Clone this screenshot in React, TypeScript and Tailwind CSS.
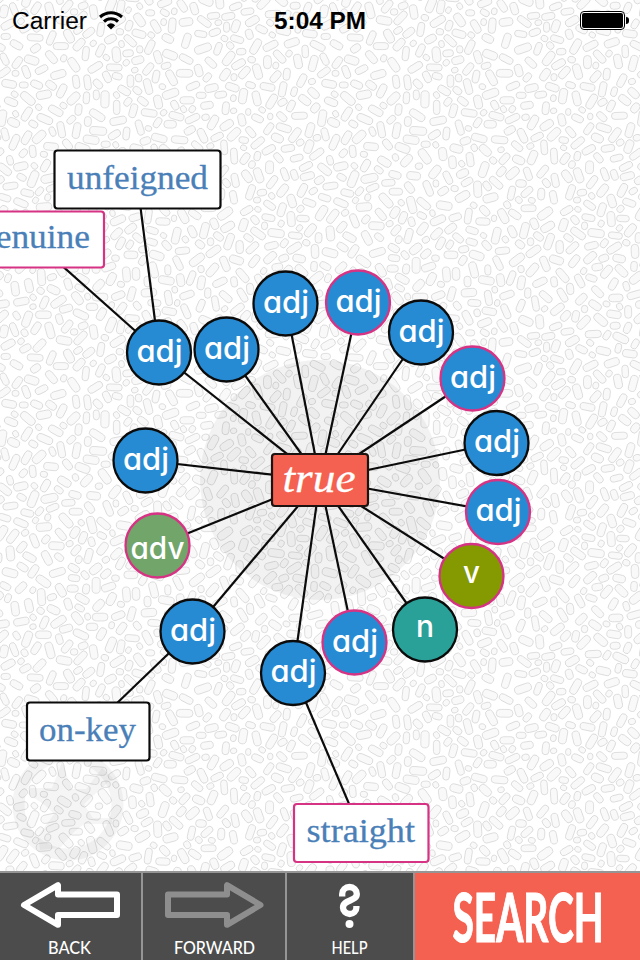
import React from "react";

type Pill = { x: number; y: number; a: number; l: number; r: number };

const TILE_W = 320;
const TILE_H = 320;

function mulberry(seed: number) {
  let s = seed;
  return () => {
    s = (s + 0x6d2b79f5) | 0;
    let t = Math.imul(s ^ (s >>> 15), 1 | s);
    t = (t + Math.imul(t ^ (t >>> 7), 61 | t)) ^ t;
    return ((t ^ (t >>> 14)) >>> 0) / 4294967296;
  };
}

// Packs capsules into a wrapping tile, longest first, keeping a thin gap between them.
function packPills(): Pill[] {
  const rnd = mulberry(11);
  const cell = 20;
  const cols = TILE_W / cell;
  const rows = TILE_H / cell;
  const grid: number[][][] = Array.from({ length: cols * rows }, () => []);
  const pills: Pill[] = [];
  const passes = [
    { n: 900, l: 4, r: 3.6 },
    { n: 5000, l: 2.9, r: 3.5 },
    { n: 20000, l: 1.9, r: 3.3 },
    { n: 20000, l: 0.7, r: 2.9 },
  ];
  for (const p of passes) {
    for (let i = 0; i < p.n; i++) {
      const x = rnd() * TILE_W;
      const y = rnd() * TILE_H;
      const a = rnd() * Math.PI;
      const l = p.l * (0.8 + rnd() * 0.4);
      const r = p.r * (0.9 + rnd() * 0.25);
      const pts = [-1, -0.5, 0, 0.5, 1].map((k) => [x + Math.cos(a) * l * k, y + Math.sin(a) * l * k]);
      const cx = Math.floor(x / cell);
      const cy = Math.floor(y / cell);
      let ok = true;
      for (let dx = -1; dx <= 1 && ok; dx++) {
        for (let dy = -1; dy <= 1 && ok; dy++) {
          const g = grid[((cy + dy + rows) % rows) * cols + ((cx + dx + cols) % cols)];
          for (const q of g) {
            for (const s of pts) {
              let ex = Math.abs(q[0] - s[0]);
              let ey = Math.abs(q[1] - s[1]);
              ex = Math.min(ex, Math.abs(TILE_W - ex));
              ey = Math.min(ey, Math.abs(TILE_H - ey));
              const d = q[2] + r + 1.4;
              if (ex * ex + ey * ey < d * d) {
                ok = false;
                break;
              }
            }
            if (!ok) break;
          }
        }
      }
      if (!ok) continue;
      pills.push({ x, y, a: (a * 180) / Math.PI, l, r });
      for (const s of pts) grid[cy * cols + cx].push([s[0], s[1], r]);
    }
  }
  return pills;
}

const PILLS = packPills();

function Backdrop() {
  return (
    <g>
      <defs>
        <pattern id="pills" width={TILE_W} height={TILE_H} patternUnits="userSpaceOnUse">
          {PILLS.flatMap((p, i) =>
            [-TILE_W, 0, TILE_W].flatMap((ox) =>
              [-TILE_H, 0, TILE_H]
                .filter((oy) => {
                  const x = p.x + ox;
                  const y = p.y + oy;
                  return x > -12 && x < TILE_W + 12 && y > -12 && y < TILE_H + 12;
                })
                .map((oy) => (
                  <rect
                    key={`${i}/${ox}/${oy}`}
                    x={-p.l - p.r}
                    y={-p.r}
                    width={2 * (p.l + p.r)}
                    height={2 * p.r}
                    rx={p.r}
                    fill="#f9f9f9"
                    stroke="#cfcfcf"
                    strokeWidth="0.65"
                    transform={`translate(${p.x + ox} ${p.y + oy}) rotate(${p.a})`}
                  />
                )),
            ),
          )}
        </pattern>
      </defs>
      <rect width="640" height="872" fill="#ffffff" />
      <rect width="640" height="872" fill="url(#pills)" />
      <circle cx="320" cy="480" r="120" fill="#000" fillOpacity="0.05" />
      <circle cx="68" cy="805" r="49.500" strokeWidth="12" fill="none" stroke="#000" strokeOpacity="0.045" />
      <path
        d="M62 762L72 789H86L102 768L113 778L84 804L93 818H112V824H84L74 832L60 848L40 850L38 836L54 814L46 806L28 794L30 788H52Z"
        fill="#000"
        fillOpacity="0.04"
      />
    </g>
  );
}

const PINK = "#d63384";
const BLACK = "#0b0b0b";
const BLUE = "#268bd2";

const NODES = [
  { x: 159, y: 352.5, t: "adj", s: BLACK, f: BLUE },
  { x: 226.5, y: 349.5, t: "adj", s: BLACK, f: BLUE },
  { x: 285.5, y: 303.5, t: "adj", s: BLACK, f: BLUE },
  { x: 358, y: 302.5, t: "adj", s: PINK, f: BLUE },
  { x: 421, y: 332.5, t: "adj", s: BLACK, f: BLUE },
  { x: 472.5, y: 378.5, t: "adj", s: PINK, f: BLUE },
  { x: 496.5, y: 443, t: "adj", s: BLACK, f: BLUE },
  { x: 498, y: 512, t: "adj", s: PINK, f: BLUE },
  { x: 471.5, y: 576, t: "v", s: PINK, f: "#859900" },
  { x: 425, y: 629.5, t: "n", s: BLACK, f: "#2aa198" },
  { x: 354.5, y: 642.5, t: "adj", s: PINK, f: BLUE },
  { x: 293, y: 673, t: "adj", s: BLACK, f: BLUE },
  { x: 192.5, y: 631.5, t: "adj", s: BLACK, f: BLUE },
  { x: 157.5, y: 545.5, t: "adv", s: PINK, f: "#72a56a" },
  { x: 145.5, y: 460.5, t: "adj", s: BLACK, f: BLUE },
];

const LABEL = {
  adj: { w: 46, dx: 0.5, dy: 9 },
  adv: { w: 54, dx: 0, dy: 13 },
  v: { w: 17, dx: 0, dy: 6.5 },
  n: { w: 18, dx: 0, dy: 7.5 },
} as Record<string, { w: number; dx: number; dy: number }>;

const WORDS = [
  { x: -40, y: 211.5, w: 144, h: 56, t: "genuine", tx: -22, tw: 112, s: PINK, base: 247.5 },
  { x: 54.5, y: 150.5, w: 166, h: 58, t: "unfeigned", tx: 67, tw: 141, s: BLACK, base: 188.5 },
  { x: 27, y: 702.5, w: 122.5, h: 58, t: "on-key", tx: 39, tw: 97, s: BLACK, base: 740.5 },
  { x: 294, y: 804, w: 134.5, h: 58, t: "straight", tx: 306.5, tw: 108.5, s: PINK, base: 842 },
];

const LINKS = [
  [137, 180, 159, 352],
  [32, 239, 159, 352],
  [88, 731, 192, 631],
  [361, 832, 293, 672],
];

function Graph() {
  return (
    <g>
      <g stroke={BLACK} strokeWidth="2.2">
        {NODES.map((n, i) => (
          <line key={i} x1="320" y1="480" x2={n.x} y2={n.y} />
        ))}
        {LINKS.map((l, i) => (
          <line key={i} x1={l[0]} y1={l[1]} x2={l[2]} y2={l[3]} />
        ))}
      </g>
      {WORDS.map((w) => (
        <g key={w.t}>
          <rect x={w.x} y={w.y} width={w.w} height={w.h} rx="3" fill="#fff" stroke={w.s} strokeWidth="2.2" />
          <text
            x={w.tx}
            y={w.base}
            textLength={w.tw}
            lengthAdjust="spacingAndGlyphs"
            className="font-['Liberation_Serif',serif] text-[34.5px]"
            fill="#4a7fb8"
            stroke="#4a7fb8"
            strokeWidth="0.3"
          >
            {w.t}
          </text>
        </g>
      ))}
      {NODES.map((n, i) => {
        const l = LABEL[n.t];
        return (
          <g key={i}>
            <circle cx={n.x} cy={n.y} r="32" fill={n.f} stroke={n.s} strokeWidth="2.3" />
            <text
              x={n.x - l.w / 2 + l.dx}
              y={n.y + l.dy}
              textLength={l.w}
              lengthAdjust="spacingAndGlyphs"
              fill="#fff"
              className="font-['Inter',sans-serif] text-[31px] font-medium [font-feature-settings:'cv11']"
            >
              {n.t}
            </text>
          </g>
        );
      })}
      <rect x="272" y="454" width="96" height="52" rx="3" fill="#f56150" stroke="#1c1210" strokeWidth="2.2" />
      <text
        x="282.500"
        y="492"
        textLength="73"
        lengthAdjust="spacingAndGlyphs"
        fill="#fff"
        stroke="#fff"
        strokeWidth="0.3"
        className="font-['Liberation_Serif',serif] text-[42px] italic"
      >
        true
      </text>
    </g>
  );
}

function StatusBar() {
  return (
    <div className="relative flex h-10 items-center justify-between pl-3 pr-[11px] font-['Liberation_Sans',sans-serif] text-black">
      <div className="flex flex-1 items-center gap-[11px]">
        <svg width="76" height="40">
          <text x="0" y="29" textLength="75" lengthAdjust="spacingAndGlyphs" className="text-[23.5px]">
            Carrier
          </text>
        </svg>
        <svg width="25" height="19" viewBox="0 0 25 19" fill="none" stroke="#000" strokeWidth="3">
          <path d="M1 6C7.500 .3 16.500 .3 23 6" />
          <path d="M5 10.600C9 6.800 15 6.800 19 10.600" />
          <path d="M7.800 14.200Q12 10.300 16.200 14.200L12 18.600Z" fill="#000" stroke="none" />
        </svg>
      </div>
      <svg width="94" height="40">
        <text x="0" y="29" textLength="92" lengthAdjust="spacingAndGlyphs" className="text-[23.5px] font-bold">
          5:04 PM
        </text>
      </svg>
      <div className="flex flex-1 items-center justify-end gap-px">
        <div className="h-[19px] w-[45px] rounded-[4px] border border-black bg-white p-px">
          <div className="h-full w-full rounded-[2px] bg-black" />
        </div>
        <div className="h-[7px] w-[3px] rounded-r-full bg-black" />
      </div>
    </div>
  );
}

const LABEL_CLASS = "font-['Lato',sans-serif] text-[16.5px] font-medium";

function Toolbar() {
  return (
    <div className="flex h-[89px] border-t-2 border-[#959595] bg-[#4c4c4c]">
      <button className="flex w-[143px] flex-col items-center border-r-2 border-[#959595] pt-2">
        <svg width="141" height="50" viewBox="0 0 141 50" fill="none" stroke="#fff" strokeWidth="6" strokeLinejoin="round">
          <path d="M24 24L58 4.200V13.500H117V34H58V43.800Z" />
        </svg>
        <svg width="141" height="29">
          <text x="48" y="23" textLength="43" lengthAdjust="spacingAndGlyphs" fill="#fff" className={LABEL_CLASS}>
            BACK
          </text>
        </svg>
      </button>
      <button className="flex w-[144px] flex-col items-center border-r-2 border-[#959595] pt-2">
        <svg width="142" height="50" viewBox="0 0 142 50" fill="none" stroke="#8e8e8e" strokeWidth="6" strokeLinejoin="round">
          <path d="M117.500 24L84 4.200V13.500H25V34H84V43.800Z" />
        </svg>
        <svg width="142" height="29">
          <text x="31" y="23" textLength="81" lengthAdjust="spacingAndGlyphs" fill="#fff" className={LABEL_CLASS}>
            FORWARD
          </text>
        </svg>
      </button>
      <button className="flex w-[128px] flex-col items-center border-r-2 border-[#959595] pt-2">
        <svg width="126" height="50" viewBox="0 0 126 50" fill="none" stroke="#fff" strokeWidth="6.3">
          <path d="M55.200 15.500V13A7.300 7 0 0 1 69.800 13C69.800 20.500 56 18.500 56 26.500A6.700 6.500 0 0 0 69.400 26.500V25" />
          <circle cx="62.500" cy="43" r="4" fill="#fff" stroke="none" />
        </svg>
        <svg width="126" height="29">
          <text x="44.500" y="23" textLength="36" lengthAdjust="spacingAndGlyphs" fill="#fff" className={LABEL_CLASS}>
            HELP
          </text>
        </svg>
      </button>
      <button className="flex flex-1 bg-[#f56150]">
        <svg width="225" height="87">
          <g transform="translate(37.500 68.500) scale(0.62 1)">
            <text
              x="0"
              y="0"
              textLength="244"
              lengthAdjust="spacingAndGlyphs"
              fill="#fff"
              stroke="#fff"
              strokeWidth="1.2"
              className="font-['Lato',sans-serif] text-[66px] font-bold"
            >
              SEARCH
            </text>
          </g>
        </svg>
      </button>
    </div>
  );
}

export default function App() {
  return (
    <div className="relative flex h-[960px] w-[640px] flex-col overflow-hidden bg-white">
      <svg className="absolute left-0 top-0" width="640" height="872" viewBox="0 0 640 872">
        <Backdrop />
        <Graph />
      </svg>
      <StatusBar />
      <div className="flex-1" />
      <div className="relative">
        <Toolbar />
      </div>
    </div>
  );
}
